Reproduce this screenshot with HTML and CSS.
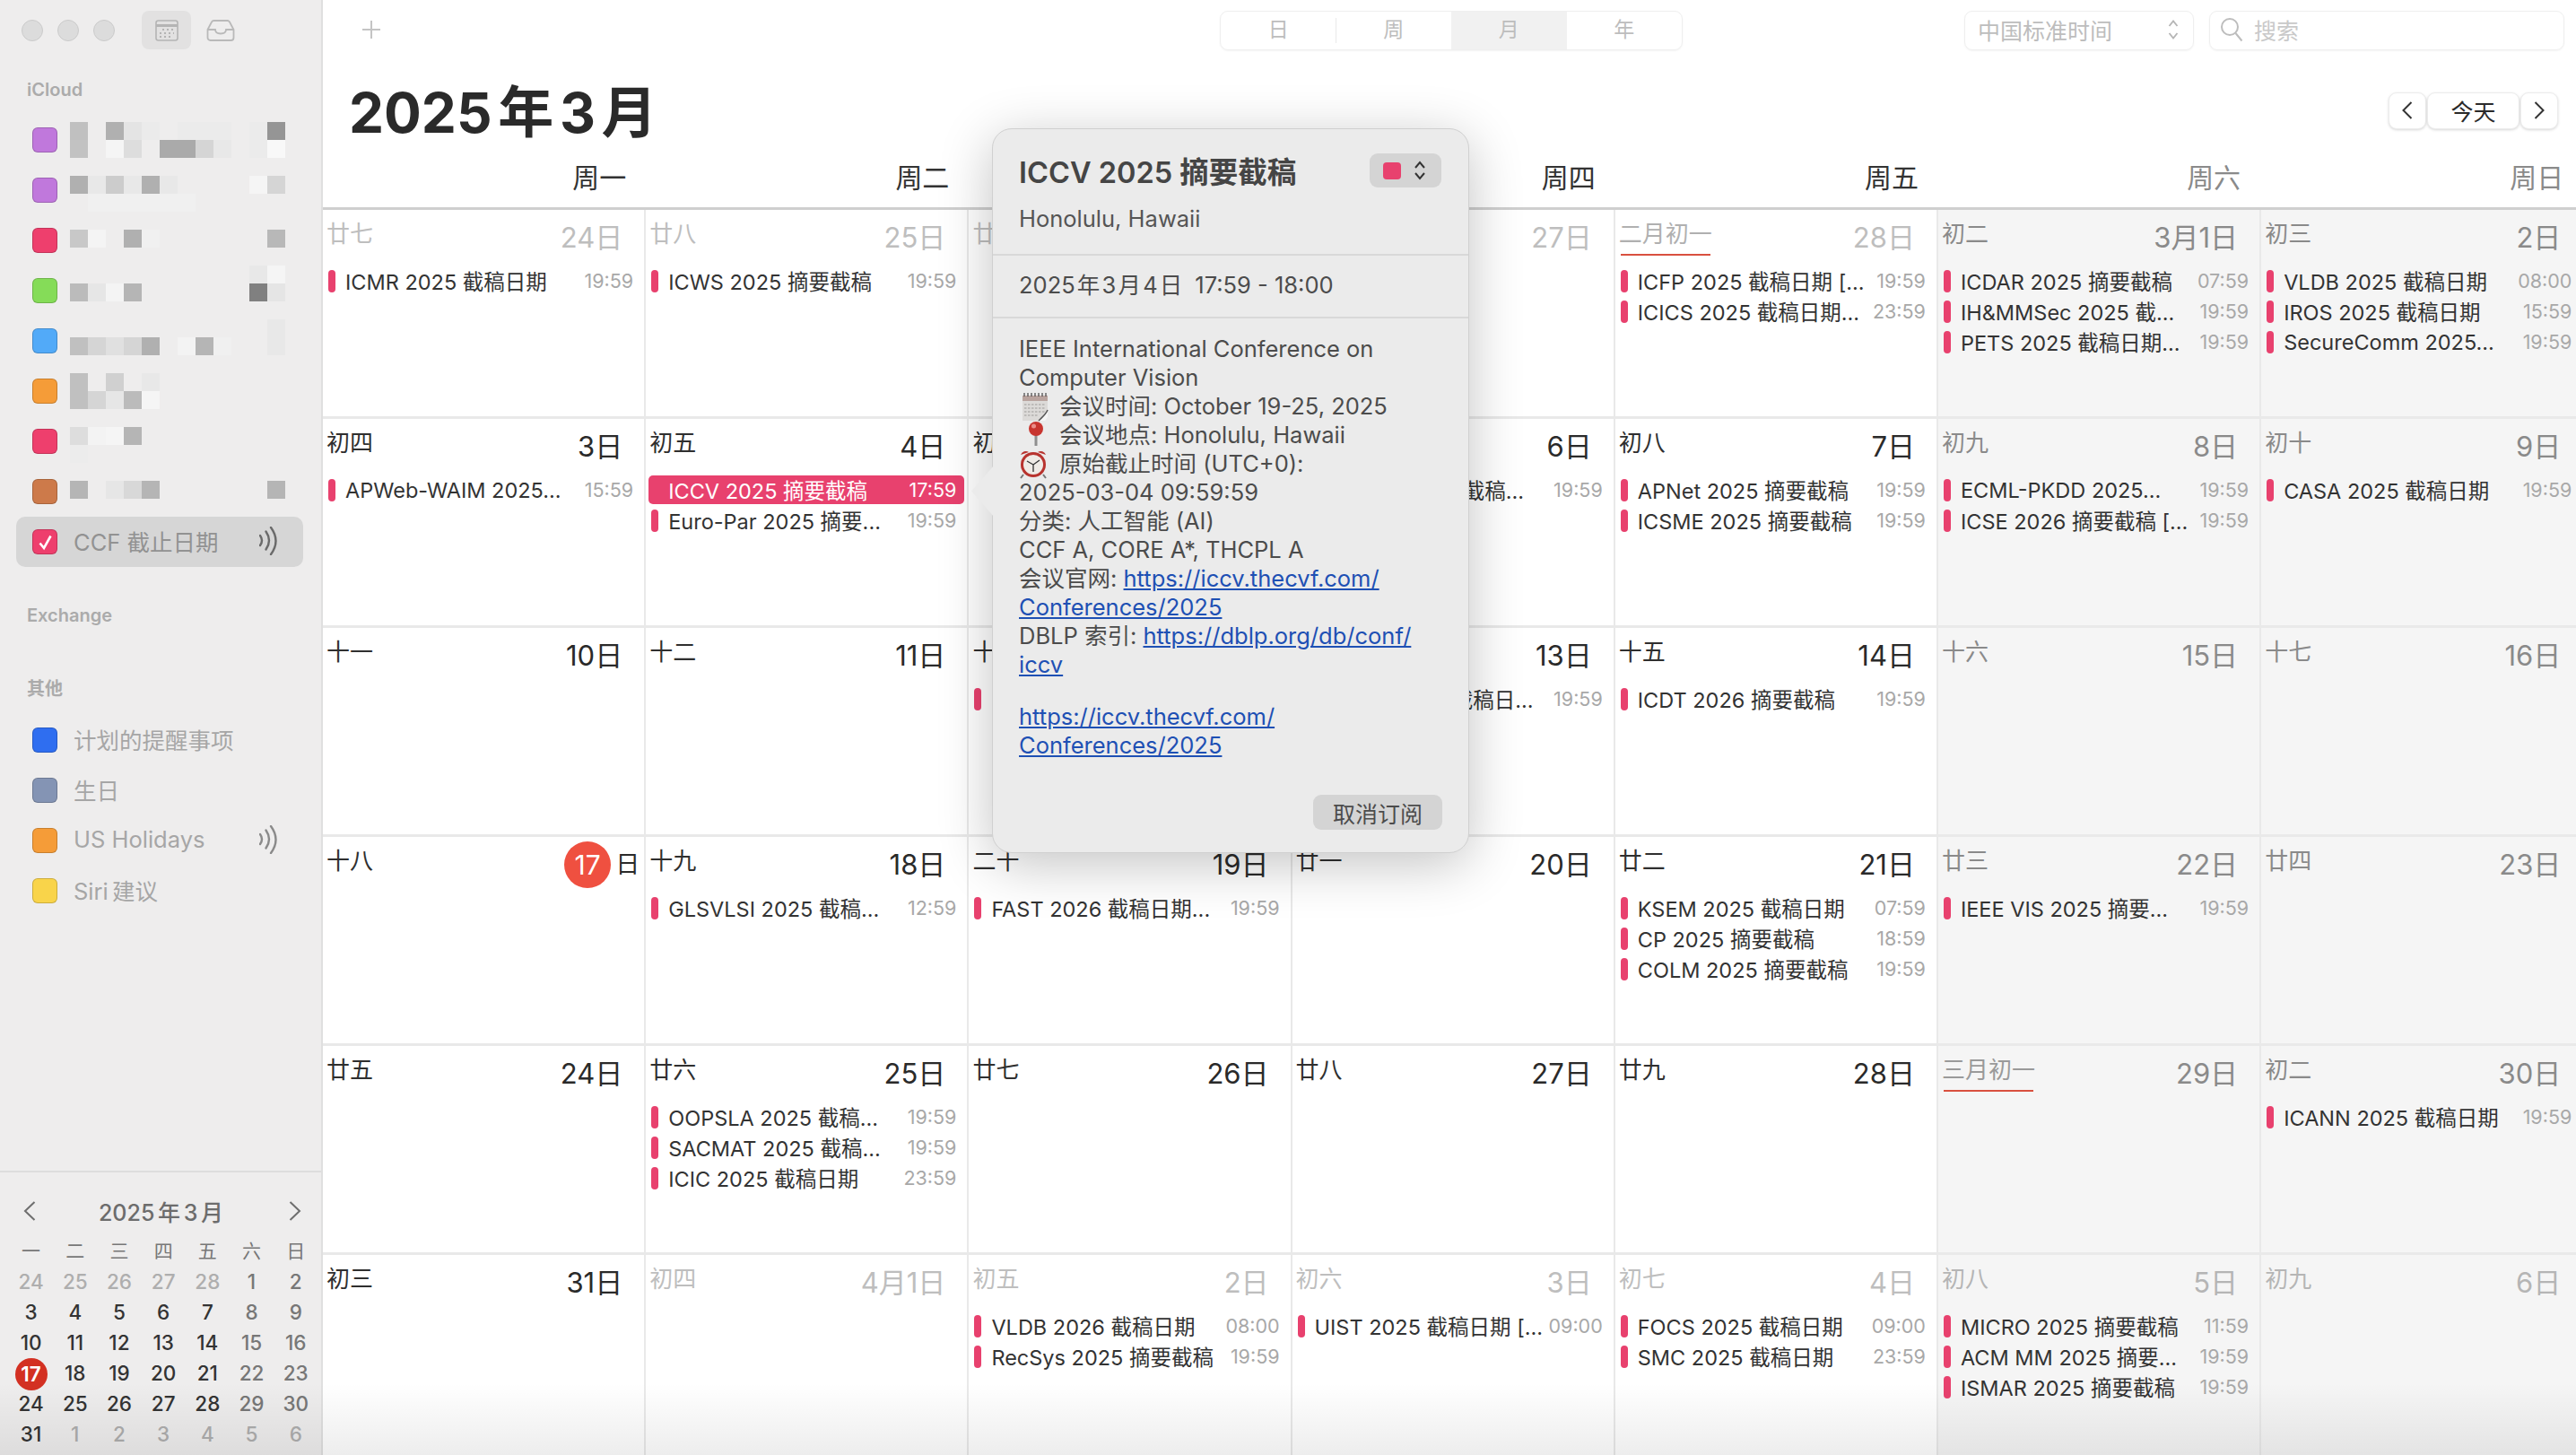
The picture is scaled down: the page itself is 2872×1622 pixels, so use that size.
FILE: index.html
```html
<!DOCTYPE html>
<html lang="zh-CN">
<head>
  <meta charset="UTF-8">
  <title>日历</title>
  <link rel="stylesheet" href="styles.css">
</head>
<body>

<div class="app">

<aside class="sidebar">
  <div class="titlebar">
    <span class="light"></span><span class="light"></span><span class="light"></span>
    <span class="tb-btn active">
      <svg width="26" height="24" viewBox="0 0 26 24" fill="none" stroke="#b4b4b4" stroke-width="1.6"><rect x="1" y="1" width="24" height="22" rx="2.5"/><path d="M1 6.5h24" stroke-width="3"/><path d="M8 11h2m3 0h2m3 0h2M5 15h2m3 0h2m3 0h2m3 0h1M5 19h2m3 0h2m3 0h2" stroke-width="1.8"/></svg>
    </span>
    <span class="tb-btn">
      <svg width="32" height="24" viewBox="0 0 32 24" fill="none" stroke="#b9b9b9" stroke-width="1.8"><path d="M1.5 11 6 2.5A3 3 0 0 1 8.500 1h15a3 3 0 0 1 2.500 1.500L30.500 11v9a3 3 0 0 1-3 3h-23a3 3 0 0 1-3-3z"/><path d="M1.500 11H10c0 3 2.500 4.500 6 4.500s6-1.500 6-4.500h8.500"/></svg>
    </span>
  </div>

  <div class="side-label first">iCloud</div>
  <ul class="cal-list">
    <li><span class="check purple"></span></li>
    <li><span class="check purple"></span></li>
    <li><span class="check red"></span></li>
    <li><span class="check green"></span></li>
    <li><span class="check sky"></span></li>
    <li><span class="check orange"></span></li>
    <li><span class="check red"></span></li>
    <li><span class="check brown"></span></li>
    <li class="selected">
      <span class="check red">
        <svg width="19" height="19" viewBox="0 0 19 19" fill="none" stroke="#fff" stroke-width="2.600"><path d="M3.500 10.500 8 16 15.500 2.500"/></svg>
      </span>
      <span class="cal-name">CCF 截止日期</span>
      <svg class="wave" width="20" height="32" viewBox="0 0 20 32" fill="none" stroke="#6a6a6a" stroke-width="2.400" stroke-linecap="round"><path d="M1 10q4 5.500 0 11M7.500 5.500q7 10 0 20M13 1q11 15 0 30"/></svg>
    </li>
  </ul>

  <!-- names are pixelated in the screenshot -->
  <svg class="mosaic" width="240" height="420" viewBox="0 0 12 21" shape-rendering="crispEdges">
    <rect x="0" y="0" width="1" height="1" fill="#c0c0c0"/><rect x="2" y="0" width="1" height="1" fill="#b0b0b0"/><rect x="3" y="0" width="1" height="1" fill="#e4e4e4"/><rect x="4" y="0" width="1" height="1" fill="#ebebeb"/><rect x="6" y="0" width="3" height="1" fill="#ebebeb"/><rect x="10" y="0" width="1" height="1" fill="#ebebeb"/><rect x="11" y="0" width="1" height="1" fill="#959595"/>
    <rect x="0" y="1" width="1" height="1" fill="#c2c2c2"/><rect x="2" y="1" width="1" height="1" fill="#f5f5f5"/><rect x="3" y="1" width="1" height="1" fill="#dddddd"/><rect x="5" y="1" width="2" height="1" fill="#aaaaaa"/><rect x="7" y="1" width="1" height="1" fill="#d5d5d5"/><rect x="8" y="1" width="1" height="1" fill="#e8e8e8"/><rect x="10" y="1" width="1" height="1" fill="#ebebeb"/><rect x="11" y="1" width="1" height="1" fill="#f8f8f8"/>
    <rect x="0" y="3" width="1" height="1" fill="#b0b0b0"/><rect x="1" y="3" width="1" height="1" fill="#e8e8e8"/><rect x="2" y="3" width="1" height="1" fill="#cccccc"/><rect x="3" y="3" width="1" height="1" fill="#e8e8e8"/><rect x="4" y="3" width="1" height="1" fill="#b0b0b0"/><rect x="5" y="3" width="1" height="1" fill="#e8e8e8"/><rect x="10" y="3" width="1" height="1" fill="#f5f5f5"/><rect x="11" y="3" width="1" height="1" fill="#d5d5d5"/>
    <rect x="1" y="4" width="6" height="1" fill="#f0f0f0"/>
    <rect x="0" y="6" width="1" height="1" fill="#c8c8c8"/><rect x="1" y="6" width="1" height="1" fill="#f4f4f4"/><rect x="3" y="6" width="1" height="1" fill="#b0b0b0"/><rect x="4" y="6" width="1" height="1" fill="#f0f0f0"/><rect x="11" y="6" width="1" height="1" fill="#b8b8b8"/>
    <rect x="10" y="8" width="1" height="1" fill="#e8e8e8"/><rect x="11" y="8" width="1" height="1" fill="#f5f5f5"/>
    <rect x="0" y="9" width="1" height="1" fill="#bbbbbb"/><rect x="1" y="9" width="1" height="1" fill="#e6e6e6"/><rect x="2" y="9" width="1" height="1" fill="#f4f4f4"/><rect x="3" y="9" width="1" height="1" fill="#b5b5b5"/><rect x="10" y="9" width="1" height="1" fill="#808080"/><rect x="11" y="9" width="1" height="1" fill="#e5e5e5"/>
    <rect x="11" y="11" width="1" height="2" fill="#e8e8e8"/>
    <rect x="0" y="12" width="1" height="1" fill="#c0c0c0"/><rect x="1" y="12" width="1" height="1" fill="#d5d5d5"/><rect x="2" y="12" width="1" height="1" fill="#e0e0e0"/><rect x="3" y="12" width="1" height="1" fill="#d5d5d5"/><rect x="4" y="12" width="1" height="1" fill="#b0b0b0"/><rect x="6" y="12" width="1" height="1" fill="#f3f3f3"/><rect x="7" y="12" width="1" height="1" fill="#b5b5b5"/><rect x="8" y="12" width="1" height="1" fill="#f0f0f0"/>
    <rect x="0" y="14" width="1" height="1" fill="#c0c0c0"/><rect x="2" y="14" width="1" height="1" fill="#d0d0d0"/><rect x="4" y="14" width="1" height="1" fill="#e8e8e8"/>
    <rect x="0" y="15" width="1" height="1" fill="#c0c0c0"/><rect x="1" y="15" width="1" height="1" fill="#d5d5d5"/><rect x="2" y="15" width="1" height="1" fill="#e6e6e6"/><rect x="3" y="15" width="1" height="1" fill="#bbbbbb"/><rect x="4" y="15" width="1" height="1" fill="#f5f5f5"/>
    <rect x="0" y="17" width="1" height="1" fill="#dddddd"/><rect x="1" y="17" width="1" height="1" fill="#f3f3f3"/><rect x="2" y="17" width="1" height="1" fill="#f5f5f5"/><rect x="3" y="17" width="1" height="1" fill="#b5b5b5"/>
    <rect x="0" y="18" width="1" height="1" fill="#ececec"/>
    <rect x="0" y="20" width="1" height="1" fill="#b5b5b5"/><rect x="2" y="20" width="1" height="1" fill="#e6e6e6"/><rect x="3" y="20" width="1" height="1" fill="#d8d8d8"/><rect x="4" y="20" width="1" height="1" fill="#b5b5b5"/><rect x="11" y="20" width="1" height="1" fill="#b5b5b5"/>
  </svg>

  <div class="side-label exchange">Exchange</div>
  <div class="side-label other">其他</div>
  <ul class="cal-list">
    <li><span class="check blue"></span><span class="cal-name">计划的提醒事项</span></li>
    <li><span class="check slate"></span><span class="cal-name">生日</span></li>
    <li><span class="check orange"></span><span class="cal-name">US Holidays</span>
      <svg class="wave" width="20" height="32" viewBox="0 0 20 32" fill="none" stroke="#8a8a8a" stroke-width="2.400" stroke-linecap="round"><path d="M1 10q4 5.500 0 11M7.500 5.500q7 10 0 20M13 1q11 15 0 30"/></svg>
    </li>
    <li><span class="check yellow"></span><span class="cal-name tight">Siri 建议</span></li>
  </ul>

  <div class="mini">
    <div class="mini-head">
      <svg width="14" height="22" viewBox="0 0 14 22" fill="none" stroke="#6e6e6e" stroke-width="2"><path d="M12.500 1 2 11l10.500 10"/></svg>
      <span class="mini-title">2025 年 3 月</span>
      <svg width="14" height="22" viewBox="0 0 14 22" fill="none" stroke="#6e6e6e" stroke-width="2"><path d="M1.500 1 12 11 1.500 21"/></svg>
    </div>
    <div class="mini-grid">
      <b>一</b><b>二</b><b>三</b><b>四</b><b>五</b><b>六</b><b>日</b>
      <span class="off">24</span><span class="off">25</span><span class="off">26</span><span class="off">27</span><span class="off">28</span><span class="wk">1</span><span class="wk">2</span>
      <span>3</span><span>4</span><span>5</span><span>6</span><span>7</span><span class="wk">8</span><span class="wk">9</span>
      <span>10</span><span>11</span><span>12</span><span>13</span><span>14</span><span class="wk">15</span><span class="wk">16</span>
      <span class="now">17</span><span>18</span><span>19</span><span>20</span><span>21</span><span class="wk">22</span><span class="wk">23</span>
      <span>24</span><span>25</span><span>26</span><span>27</span><span>28</span><span class="wk">29</span><span class="wk">30</span>
      <span>31</span><span class="off">1</span><span class="off">2</span><span class="off">3</span><span class="off">4</span><span class="off">5</span><span class="off">6</span>
    </div>
  </div>
</aside>

<main class="main">
  <div class="toolbar">
    <svg class="plus" width="20" height="20" viewBox="0 0 20 20" stroke="#c4c4c4" stroke-width="2"><path d="M10 0v20M0 10h20"/></svg>
    <div class="segments">
      <span class="seg">日</span><span class="seg">周</span><span class="seg on">月</span><span class="seg">年</span>
    </div>
    <div class="tz">
      <span>中国标准时间</span>
      <svg width="12" height="24" viewBox="0 0 12 24" fill="none" stroke="#b5b5b5" stroke-width="1.800"><path d="M1.500 8 6 2.500 10.500 8M1.500 16 6 21.500 10.500 16"/></svg>
    </div>
    <div class="search">
      <svg width="26" height="28" viewBox="0 0 26 28" fill="none" stroke="#bdbdbd" stroke-width="2"><circle cx="11" cy="11" r="9"/><path d="m17.500 18 7 8.500"/></svg>
      <span>搜索</span>
    </div>
  </div>

  <div class="title-row">
    <h1>2025 年 3 月</h1>
    <div class="nav">
      <span class="nav-btn arrow"><svg width="12" height="20" viewBox="0 0 12 20" fill="none" stroke="#333" stroke-width="2"><path d="M10.500 1 1.500 10l9 9"/></svg></span>
      <span class="nav-btn">今天</span>
      <span class="nav-btn arrow"><svg width="12" height="20" viewBox="0 0 12 20" fill="none" stroke="#333" stroke-width="2"><path d="M1.500 1l9 9-9 9"/></svg></span>
    </div>
  </div>

  <div class="weekdays">
    <span>周一</span><span>周二</span><span></span><span>周四</span><span>周五</span><span class="wk">周六</span><span class="wk">周日</span>
  </div>

  <div class="month">
    <!-- row 1 -->
    <div class="cell off"><div class="cell-head"><span class="lunar">廿七</span><span class="date">24日</span></div>
      <div class="ev"><i></i><span class="ev-name">ICMR 2025 截稿日期</span><span class="ev-time">19:59</span></div></div>
    <div class="cell off"><div class="cell-head"><span class="lunar">廿八</span><span class="date">25日</span></div>
      <div class="ev"><i></i><span class="ev-name">ICWS 2025 摘要截稿</span><span class="ev-time">19:59</span></div></div>
    <div class="cell off"><div class="cell-head"><span class="lunar">廿九</span></div></div>
    <div class="cell off"><div class="cell-head"><span class="lunar"></span><span class="date">27日</span></div></div>
    <div class="cell off"><div class="cell-head"><span class="lunar first-day">二月初一</span><span class="date">28日</span></div>
      <div class="ev"><i></i><span class="ev-name">ICFP 2025 截稿日期 [...</span><span class="ev-time">19:59</span></div>
      <div class="ev"><i></i><span class="ev-name">ICICS 2025 截稿日期...</span><span class="ev-time">23:59</span></div></div>
    <div class="cell wkend"><div class="cell-head"><span class="lunar">初二</span><span class="date">3月1日</span></div>
      <div class="ev"><i></i><span class="ev-name">ICDAR 2025 摘要截稿</span><span class="ev-time">07:59</span></div>
      <div class="ev"><i></i><span class="ev-name">IH&amp;MMSec 2025 截...</span><span class="ev-time">19:59</span></div>
      <div class="ev"><i></i><span class="ev-name">PETS 2025 截稿日期...</span><span class="ev-time">19:59</span></div></div>
    <div class="cell wkend"><div class="cell-head"><span class="lunar">初三</span><span class="date">2日</span></div>
      <div class="ev"><i></i><span class="ev-name">VLDB 2025 截稿日期</span><span class="ev-time">08:00</span></div>
      <div class="ev"><i></i><span class="ev-name">IROS 2025 截稿日期</span><span class="ev-time">15:59</span></div>
      <div class="ev"><i></i><span class="ev-name">SecureComm 2025...</span><span class="ev-time">19:59</span></div></div>

    <!-- row 2 -->
    <div class="cell"><div class="cell-head"><span class="lunar">初四</span><span class="date">3日</span></div>
      <div class="ev"><i></i><span class="ev-name">APWeb-WAIM 2025...</span><span class="ev-time">15:59</span></div></div>
    <div class="cell"><div class="cell-head"><span class="lunar">初五</span><span class="date">4日</span></div>
      <div class="ev picked"><span class="ev-name">ICCV 2025 摘要截稿</span><span class="ev-time">17:59</span></div>
      <div class="ev"><i></i><span class="ev-name">Euro-Par 2025 摘要...</span><span class="ev-time">19:59</span></div></div>
    <div class="cell"><div class="cell-head"><span class="lunar">初六</span></div></div>
    <div class="cell"><div class="cell-head"><span class="lunar"></span><span class="date">6日</span></div>
      <div class="ev"><i></i><span class="ev-name">SIGMOD 2025 截稿...</span><span class="ev-time">19:59</span></div></div>
    <div class="cell"><div class="cell-head"><span class="lunar">初八</span><span class="date">7日</span></div>
      <div class="ev"><i></i><span class="ev-name">APNet 2025 摘要截稿</span><span class="ev-time">19:59</span></div>
      <div class="ev"><i></i><span class="ev-name">ICSME 2025 摘要截稿</span><span class="ev-time">19:59</span></div></div>
    <div class="cell wkend"><div class="cell-head"><span class="lunar">初九</span><span class="date">8日</span></div>
      <div class="ev"><i></i><span class="ev-name">ECML-PKDD 2025...</span><span class="ev-time">19:59</span></div>
      <div class="ev"><i></i><span class="ev-name">ICSE 2026 摘要截稿 [...</span><span class="ev-time">19:59</span></div></div>
    <div class="cell wkend"><div class="cell-head"><span class="lunar">初十</span><span class="date">9日</span></div>
      <div class="ev"><i></i><span class="ev-name">CASA 2025 截稿日期</span><span class="ev-time">19:59</span></div></div>

    <!-- row 3 -->
    <div class="cell"><div class="cell-head"><span class="lunar">十一</span><span class="date">10日</span></div></div>
    <div class="cell"><div class="cell-head"><span class="lunar">十二</span><span class="date">11日</span></div></div>
    <div class="cell"><div class="cell-head"><span class="lunar">十三</span></div>
      <div class="ev"><i></i></div></div>
    <div class="cell"><div class="cell-head"><span class="lunar"></span><span class="date">13日</span></div>
      <div class="ev"><i></i><span class="ev-name">ECOOP 2025 截稿日...</span><span class="ev-time">19:59</span></div></div>
    <div class="cell"><div class="cell-head"><span class="lunar">十五</span><span class="date">14日</span></div>
      <div class="ev"><i></i><span class="ev-name">ICDT 2026 摘要截稿</span><span class="ev-time">19:59</span></div></div>
    <div class="cell wkend"><div class="cell-head"><span class="lunar">十六</span><span class="date">15日</span></div></div>
    <div class="cell wkend"><div class="cell-head"><span class="lunar">十七</span><span class="date">16日</span></div></div>

    <!-- row 4 -->
    <div class="cell"><div class="cell-head today"><span class="lunar">十八</span><span class="date"><span class="today-num">17</span>日</span></div></div>
    <div class="cell"><div class="cell-head"><span class="lunar">十九</span><span class="date">18日</span></div>
      <div class="ev"><i></i><span class="ev-name">GLSVLSI 2025 截稿...</span><span class="ev-time">12:59</span></div></div>
    <div class="cell"><div class="cell-head"><span class="lunar">二十</span><span class="date">19日</span></div>
      <div class="ev"><i></i><span class="ev-name">FAST 2026 截稿日期...</span><span class="ev-time">19:59</span></div></div>
    <div class="cell"><div class="cell-head"><span class="lunar">廿一</span><span class="date">20日</span></div></div>
    <div class="cell"><div class="cell-head"><span class="lunar">廿二</span><span class="date">21日</span></div>
      <div class="ev"><i></i><span class="ev-name">KSEM 2025 截稿日期</span><span class="ev-time">07:59</span></div>
      <div class="ev"><i></i><span class="ev-name">CP 2025 摘要截稿</span><span class="ev-time">18:59</span></div>
      <div class="ev"><i></i><span class="ev-name">COLM 2025 摘要截稿</span><span class="ev-time">19:59</span></div></div>
    <div class="cell wkend"><div class="cell-head"><span class="lunar">廿三</span><span class="date">22日</span></div>
      <div class="ev"><i></i><span class="ev-name">IEEE VIS 2025 摘要...</span><span class="ev-time">19:59</span></div></div>
    <div class="cell wkend"><div class="cell-head"><span class="lunar">廿四</span><span class="date">23日</span></div></div>

    <!-- row 5 -->
    <div class="cell"><div class="cell-head"><span class="lunar">廿五</span><span class="date">24日</span></div></div>
    <div class="cell"><div class="cell-head"><span class="lunar">廿六</span><span class="date">25日</span></div>
      <div class="ev"><i></i><span class="ev-name">OOPSLA 2025 截稿...</span><span class="ev-time">19:59</span></div>
      <div class="ev"><i></i><span class="ev-name">SACMAT 2025 截稿...</span><span class="ev-time">19:59</span></div>
      <div class="ev"><i></i><span class="ev-name">ICIC 2025 截稿日期</span><span class="ev-time">23:59</span></div></div>
    <div class="cell"><div class="cell-head"><span class="lunar">廿七</span><span class="date">26日</span></div></div>
    <div class="cell"><div class="cell-head"><span class="lunar">廿八</span><span class="date">27日</span></div></div>
    <div class="cell"><div class="cell-head"><span class="lunar">廿九</span><span class="date">28日</span></div></div>
    <div class="cell wkend"><div class="cell-head"><span class="lunar first-day">三月初一</span><span class="date">29日</span></div></div>
    <div class="cell wkend"><div class="cell-head"><span class="lunar">初二</span><span class="date">30日</span></div>
      <div class="ev"><i></i><span class="ev-name">ICANN 2025 截稿日期</span><span class="ev-time">19:59</span></div></div>

    <!-- row 6 -->
    <div class="cell"><div class="cell-head"><span class="lunar">初三</span><span class="date">31日</span></div></div>
    <div class="cell off"><div class="cell-head"><span class="lunar">初四</span><span class="date">4月1日</span></div></div>
    <div class="cell off"><div class="cell-head"><span class="lunar">初五</span><span class="date">2日</span></div>
      <div class="ev"><i></i><span class="ev-name">VLDB 2026 截稿日期</span><span class="ev-time">08:00</span></div>
      <div class="ev"><i></i><span class="ev-name">RecSys 2025 摘要截稿</span><span class="ev-time">19:59</span></div></div>
    <div class="cell off"><div class="cell-head"><span class="lunar">初六</span><span class="date">3日</span></div>
      <div class="ev"><i></i><span class="ev-name">UIST 2025 截稿日期 [...</span><span class="ev-time">09:00</span></div></div>
    <div class="cell off"><div class="cell-head"><span class="lunar">初七</span><span class="date">4日</span></div>
      <div class="ev"><i></i><span class="ev-name">FOCS 2025 截稿日期</span><span class="ev-time">09:00</span></div>
      <div class="ev"><i></i><span class="ev-name">SMC 2025 截稿日期</span><span class="ev-time">23:59</span></div></div>
    <div class="cell wkend off"><div class="cell-head"><span class="lunar">初八</span><span class="date">5日</span></div>
      <div class="ev"><i></i><span class="ev-name">MICRO 2025 摘要截稿</span><span class="ev-time">11:59</span></div>
      <div class="ev"><i></i><span class="ev-name">ACM MM 2025 摘要...</span><span class="ev-time">19:59</span></div>
      <div class="ev"><i></i><span class="ev-name">ISMAR 2025 摘要截稿</span><span class="ev-time">19:59</span></div></div>
    <div class="cell wkend off"><div class="cell-head"><span class="lunar">初九</span><span class="date">6日</span></div></div>
  </div>
</main>

</div>

<div class="popover">
  <span class="pop-tail"></span>
  <section class="pop-head">
    <div class="pop-title-row">
      <h2>ICCV 2025 摘要截稿</h2>
      <span class="color-pick">
        <span class="swatch"></span>
        <svg width="14" height="24" viewBox="0 0 14 24" fill="none" stroke="#333" stroke-width="2"><path d="M2 9l5-6 5 6M2 15l5 6 5-6"/></svg>
      </span>
    </div>
    <div class="pop-place">Honolulu, Hawaii</div>
  </section>
  <section class="pop-date"><span class="date-part">2025 年 3 月 4 日</span><span class="time-part">17:59 - 18:00</span></section>
  <section class="pop-body">
    IEEE International Conference on<br>
    Computer Vision<br>
    <svg class="emoji" width="32" height="30" viewBox="0 0 32 30"><path d="M4 3h28v22l-7 6H4z" fill="#dcdad8"/><path d="M4 3h28v6H4z" fill="#b9a39e"/><path d="M6 0v4M10 0v4M14 0v4M18 0v4M22 0v4M26 0v4M30 0v4" stroke="#444" stroke-width="1.200"/><path d="M6 13h24M6 17h24M6 21h24M6 25h16" stroke="#bdbbb9" stroke-width="2" stroke-dasharray="2.500 1.500"/><path d="M32 19c-2 5-5 7-10 12h7l3-4z" fill="#f6f6f6"/><path d="M32 19c-2 5-5 7-10 12" fill="none" stroke="#555" stroke-width="1.500"/></svg><span>会议时间: October 19-25, 2025</span><br>
    <svg class="emoji" width="32" height="30" viewBox="0 0 32 30"><path d="M19 14v13" stroke="#8f8f8f" stroke-width="3"/><circle cx="19" cy="8" r="8" fill="#c8352f"/><circle cx="16.500" cy="5" r="2.500" fill="#ea8f8a"/></svg><span>会议地点: Honolulu, Hawaii</span><br>
    <svg class="emoji" width="32" height="30" viewBox="0 0 32 30"><path d="M5 27l-3 4M27 27l3 4" stroke="#777" stroke-width="2"/><path d="M2 5a6 6 0 0 1 9-3zM30 5a6 6 0 0 0-9-3z" fill="#b8332e"/><circle cx="16" cy="16" r="14" fill="#b8332e"/><circle cx="16" cy="16" r="11" fill="#efebe6"/><path d="M16 16l-7-4M16 16l7-5M16 16v8" stroke="#333" stroke-width="1.300" fill="none"/></svg><span>原始截止时间 (UTC+0):</span><br>
    2025-03-04 09:59:59<br>
    分类: 人工智能 (AI)<br>
    CCF A, CORE A*, THCPL A<br>
    会议官网: <a href="#">https://iccv.thecvf.com/<br>Conferences/2025</a><br>
    DBLP 索引: <a href="#">https://dblp.org/db/conf/<br>iccv</a>
    <div class="pop-links">
      <a href="#">https://iccv.thecvf.com/<br>Conferences/2025</a>
    </div>
  </section>
  <div class="pop-foot"><button type="button">取消订阅</button></div>
</div>

<div class="fade"></div>

</body>
</html>
```

FILE: styles.css
```css
* {
  box-sizing: border-box;
}

html, body {
  margin: 0;
  height: 100%;
  overflow: hidden;
}

body {
  position: relative;
  width: 2872px;
  height: 1622px;
  background: #fff;
  color: #2a2a2a;
  font-family: Inter, "Noto Sans CJK SC", sans-serif;
}

.app {
  display: flex;
  height: 1622px;
}

/* sidebar */
.sidebar {
  position: relative;
  display: flex;
  flex-direction: column;
  flex: none;
  width: 360px;
  background: #eeeded;
  border-right: 2px solid #dfdfdf;
}

.titlebar {
  display: flex;
  align-items: center;
  height: 67px;
  padding-left: 24px;
  flex: none;
}

.light {
  width: 24px;
  height: 24px;
  margin-right: 16px;
  border-radius: 50%;
  background: #dcdcdc;
  border: 1px solid #cbcbcb;
}

.tb-btn {
  display: flex;
  align-items: center;
  justify-content: center;
  width: 55px;
  height: 43px;
  border-radius: 8px;
}

.tb-btn.active {
  margin-left: 14px;
  margin-right: 5px;
  background: #e2e1e1;
}

.side-label {
  height: 24px;
  padding-left: 30px;
  font-size: 20px;
  line-height: 24px;
  font-weight: 600;
  color: #ababab;
}

.side-label.first {
  margin-top: 21px;
  margin-bottom: 16px;
}

.side-label.exchange {
  margin-top: 42px;
}

.side-label.other {
  margin-top: 58px;
  margin-bottom: 17px;
}

.cal-list {
  list-style: none;
  margin: 0;
  padding: 0;
}

.cal-list li {
  position: relative;
  display: flex;
  align-items: center;
  height: 56px;
  padding-left: 36px;
}

.cal-list li.selected::before {
  content: "";
  position: absolute;
  left: 18px;
  right: 20px;
  top: 0;
  height: 56px;
  border-radius: 10px;
  background: #d6d6d6;
}

.check {
  position: relative;
  display: flex;
  align-items: center;
  justify-content: center;
  flex: none;
  width: 28px;
  height: 28px;
  border-radius: 6px;
  border: 1px solid rgba(0, 0, 0, 0.18);
}

.purple { background: #c078dc; }
.red { background: #ee3f6d; }
.green { background: #85dc58; }
.sky { background: #52aaf8; }
.orange { background: #f59c38; }
.brown { background: #cd7a4a; }
.blue { background: #2f6ef0; }
.slate { background: #8494b4; }
.yellow { background: #f9d44a; }

.cal-name {
  position: relative;
  margin: -3px 0 0 18px;
  font-size: 25.500px;
  color: #a6a6a6;
  white-space: nowrap;
}

.cal-name.tight {
  word-spacing: -3px;
}

.selected .cal-name {
  color: #929292;
}

.wave {
  position: absolute;
  left: 289px;
  top: 11px;
}

.mosaic {
  position: absolute;
  left: 78px;
  top: 136px;
}

.mini {
  margin-top: auto;
  height: 317px;
  border-top: 2px solid #dddddd;
}

.mini-head {
  display: flex;
  align-items: center;
  justify-content: space-between;
  height: 36px;
  margin-top: 25px;
  padding: 0 22px 0 26px;
}

.mini-title {
  margin-left: -3px;
  font-size: 25px;
  font-weight: 500;
  color: #6c6c6c;
  word-spacing: -3px;
}

.mini-grid {
  display: grid;
  grid-template-columns: repeat(7, 49.200px);
  grid-auto-rows: 34px;
  margin-top: 10px;
  padding-left: 10px;
  font-size: 22.500px;
  font-weight: 500;
  text-align: center;
  line-height: 34px;
  color: #333;
}

.mini-grid b {
  font-weight: 400;
  font-size: 21px;
  color: #777;
}

.mini-grid .off {
  color: #aeaeae;
}

.mini-grid .wk {
  color: #777;
}

.mini-grid .now {
  justify-self: center;
  width: 36px;
  height: 36px;
  border-radius: 50%;
  background: #d33022;
  color: #fff;
  font-weight: 600;
  line-height: 36px;
}

/* main */
.main {
  flex: 1;
  min-width: 0;
  overflow: hidden;
}

.toolbar {
  display: flex;
  align-items: flex-start;
  height: 67px;
  padding-top: 12px;
}

.plus {
  margin: 11px 0 0 44px;
}

.segments {
  display: flex;
  width: 516px;
  height: 44px;
  margin-left: 936px;
  border: 1px solid #efefef;
  border-radius: 9px;
  box-shadow: 0 1px 2px rgba(0, 0, 0, 0.05);
}

.seg {
  flex: 1;
  font-size: 23px;
  line-height: 40px;
  text-align: center;
  color: #bdbdbd;
}

.seg:first-child {
  background: linear-gradient(#e9e9e9, #e9e9e9) right 7px / 1px 28px no-repeat;
}

.seg.on {
  background: #f1f1f1;
}

.tz {
  display: flex;
  align-items: center;
  justify-content: space-between;
  width: 256px;
  height: 44px;
  margin-left: 314px;
  padding: 0 16px 2px 14px;
  border: 1px solid #efefef;
  border-radius: 9px;
  box-shadow: 0 1px 2px rgba(0, 0, 0, 0.05);
  font-size: 25px;
  color: #bdbdbd;
}

.search {
  display: flex;
  align-items: center;
  gap: 12px;
  width: 396px;
  height: 44px;
  margin-left: 17px;
  padding: 0 0 2px 11px;
  border: 1px solid #efefef;
  border-radius: 9px;
  box-shadow: 0 1px 2px rgba(0, 0, 0, 0.05);
  font-size: 25px;
  color: #c9c9c9;
}

.title-row {
  display: flex;
  align-items: center;
  justify-content: space-between;
  height: 100px;
  padding: 12px 20px 0 29px;
}

h1 {
  margin: 6px 0 0 0;
  font-size: 62px;
  line-height: 76px;
  font-weight: 700;
  color: #2a2a2a;
  word-spacing: -8px;
}

.nav {
  display: flex;
  align-items: center;
  gap: 1px;
}

.nav-btn {
  display: flex;
  align-items: center;
  justify-content: center;
  width: 103px;
  height: 41px;
  border-radius: 9px;
  background: #fff;
  border: 1px solid #ececec;
  box-shadow: 0 1px 3px rgba(0, 0, 0, 0.16);
  font-size: 25px;
  color: #2a2a2a;
}

.nav-btn.arrow {
  width: 42px;
}

.weekdays {
  display: grid;
  grid-template-columns: repeat(7, 360.200px);
  height: 65px;
  font-size: 30px;
  line-height: 62px;
  text-align: right;
  color: #333;
}

.weekdays span {
  padding-right: 22px;
}

.weekdays .wk {
  color: #8a8a8a;
  padding-right: 23px;
}

.month {
  display: grid;
  grid-template-columns: repeat(7, 360.200px);
  grid-auto-rows: 233px;
  width: 2522px;
  border-top: 3px solid #cfcfcf;
  margin-top: -1px;
}

.cell {
  min-width: 0;
  border-right: 2px solid #e9e9e9;
  border-bottom: 3px solid #e9e9e9;
}

.cell.wkend {
  background: #f5f5f5;
}

.cell-head {
  display: flex;
  justify-content: space-between;
  height: 62px;
  padding: 10px 24px 0 4px;
}

.lunar {
  position: relative;
  font-size: 26px;
  line-height: 34px;
  color: #2f2f2f;
  height: 34px;
}

.date {
  margin-left: auto;
  font-size: 31px;
  line-height: 38px;
  margin-top: 2px;
  color: #2a2a2a;
}

.wkend .lunar,
.wkend .date {
  color: #8a8a8a;
}

.off .lunar,
.off .date {
  color: #bebebe;
}

.off.wkend .lunar,
.off.wkend .date {
  color: #b5b5b5;
}

.lunar.first-day {
  color: #9a9a9a;
}

.off .lunar.first-day {
  color: #b0b0b0;
}

.lunar.first-day::after {
  content: "";
  position: absolute;
  left: 2px;
  right: 2px;
  top: 39px;
  height: 2px;
  background: #d9503f;
}

.today {
  padding-right: 5px;
}

.today .date {
  display: flex;
  align-items: center;
  gap: 5px;
  margin-top: -5px;
  height: 52px;
  font-size: 27px;
}

.today-num {
  width: 52px;
  height: 52px;
  border-radius: 50%;
  background: #ef5040;
  color: #fff;
  font-size: 30px;
  line-height: 52px;
  text-align: center;
}

.ev {
  display: flex;
  align-items: center;
  height: 34px;
  padding: 0 12px 0 6px;
  font-size: 23.500px;
  color: #333;
  white-space: nowrap;
}

.ev i {
  flex: none;
  width: 8px;
  height: 25px;
  margin-right: 11px;
  border-radius: 4px;
  background: #e8416e;
}

.ev-name {
  min-width: 0;
  overflow: hidden;
}

.ev-time {
  flex: none;
  margin-left: auto;
  padding-left: 6px;
  font-size: 21.500px;
  color: #a8a8a8;
}

.ev.picked {
  height: 32px;
  margin: 1px 3px 1px 3px;
  padding: 0 9px 0 22px;
  border-radius: 5px;
  background: #e8416e;
  color: #fff;
}

.picked .ev-time {
  color: #fff;
}

/* event popover */
.popover {
  position: absolute;
  left: 1106px;
  top: 143px;
  width: 532px;
  height: 808px;
  background: #ebebeb;
  border: 1px solid #d0d0d0;
  border-radius: 22px;
  box-shadow: 0 12px 60px rgba(0, 0, 0, 0.24);
  color: #4c4c4c;
}

.pop-tail {
  position: absolute;
  left: -24px;
  top: 375px;
  width: 25px;
  height: 57px;
  background: #ebebeb;
  clip-path: polygon(100% 0, 0 50%, 100% 100%);
}

.pop-head {
  height: 141px;
  padding: 26px 30px 0 29px;
  border-bottom: 2px solid #d8d8d8;
}

.pop-title-row {
  display: flex;
  align-items: center;
  justify-content: space-between;
  height: 38px;
}

h2 {
  margin: 0;
  font-size: 32.500px;
  font-weight: 600;
  color: #454545;
  white-space: nowrap;
}

.color-pick {
  display: flex;
  align-items: center;
  justify-content: space-between;
  width: 80px;
  height: 38px;
  margin-top: 2px;
  padding: 0 17px 0 15px;
  border-radius: 9px;
  background: #d4d4d4;
}

.swatch {
  width: 20px;
  height: 19px;
  border-radius: 4px;
  background: #e8416e;
}

.pop-place {
  margin-top: 20px;
  font-size: 25.500px;
  line-height: 32px;
  color: #555;
}

.pop-date {
  height: 70px;
  padding-left: 29px;
  border-bottom: 2px solid #d8d8d8;
  font-size: 25.500px;
  line-height: 66px;
}

.date-part {
  word-spacing: -5px;
}

.time-part {
  margin-left: 14px;
}

.pop-body {
  padding: 18px 0 0 29px;
  font-size: 25.500px;
  line-height: 32px;
  white-space: nowrap;
}

.pop-links {
  margin-top: 26px;
}

.pop-body a {
  color: #1e50b4;
}

.emoji {
  vertical-align: -6px;
  margin-right: 13px;
  overflow: visible;
}

.pop-foot {
  position: absolute;
  right: 29px;
  bottom: 25px;
}

.pop-foot button {
  width: 144px;
  height: 39px;
  padding: 0;
  border: none;
  border-radius: 9px;
  background: #d4d4d4;
  color: #4c4c4c;
  font: inherit;
  font-size: 25px;
}

/* window edge darkens toward the bottom */
.fade {
  position: absolute;
  left: 0;
  right: 0;
  bottom: 0;
  height: 80px;
  background: linear-gradient(rgba(0, 0, 0, 0), rgba(0, 0, 0, 0.07));
  pointer-events: none;
}
```
